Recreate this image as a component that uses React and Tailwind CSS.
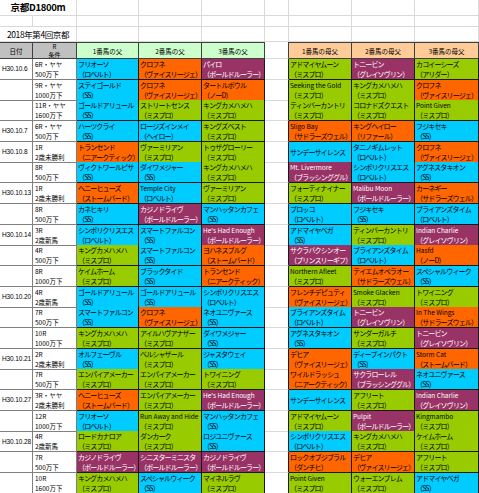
import React from "react";

const COLORS = {
  b: "bg-[#00ccff] text-black",
  o: "bg-[#ff6600] text-black",
  g: "bg-[#99cc00] text-black",
  p: "bg-[#993366] text-white",
};

const rows = [
  ["H30.10.6", "6R・ヤヤ", "500万下",
    [["フリオーソ", "（ロベルト）", "b"], ["クロフネ", "（ヴァイスリージェ）", "o"], ["パイロ", "（ボールドルーラー）", "p"]],
    [["アドマイヤムーン", "（ミスプロ）", "g"], ["トニービン", "（グレイソヴリン）", "p"], ["カコイーシーズ", "（アリダー）", "g"]]],
  ["", "9R・ヤヤ", "1000万下",
    [["ステイゴールド", "（SS）", "b"], ["クロフネ", "（ヴァイスリージェ）", "o"], ["タートルボウル", "（ノーD）", "o"]],
    [["Seeking the Gold", "（ミスプロ）", "g"], ["キングカメハメハ", "（ミスプロ）", "g"], ["クロフネ", "（ヴァイスリージェ）", "o"]]],
  ["", "11R・ヤヤ", "1600万下",
    [["ゴールドアリュール", "（SS）", "b"], ["ストリートセンス", "（ミスプロ）", "g"], ["キングカメハメハ", "（ミスプロ）", "g"]],
    [["ティンバーカントリ", "（ミスプロ）", "g"], ["コロナドズクエスト", "（ミスプロ）", "g"], ["Point Given", "（ミスプロ）", "g"]]],
  ["H30.10.7", "6R・ヤヤ", "500万下",
    [["ハーツクライ", "（SS）", "b"], ["ロージズインメイ", "（ヘイロー）", "b"], ["キングズベスト", "（ミスプロ）", "g"]],
    [["Sligo Bay", "（サドラーズウェル）", "o"], ["キングヘイロー", "（リファール）", "o"], ["フジキセキ", "（SS）", "b"]]],
  ["H30.10.8", "1R", "2歳未勝利",
    [["トランセンド", "（ニアークティック）", "o"], ["ヴァーミリアン", "（ミスプロ）", "g"], ["トゥザグローリー", "（ミスプロ）", "g"]],
    [["サンデーサイレンス", "", "b"], ["タニノギムレット", "（ロベルト）", "b"], ["クロフネ", "（ヴァイスリージェ）", "o"]]],
  ["", "8R", "500万下",
    [["ヴィクトワールピサ", "（SS）", "b"], ["ダイワメジャー", "（SS）", "b"], ["キングカメハメハ", "（ミスプロ）", "g"]],
    [["Mt. Livermore", "（ブラッシンググル）", "p"], ["シンボリクリスエス", "（ロベルト）", "b"], ["アグネスタキオン", "（SS）", "b"]]],
  ["H30.10.13", "1R", "2歳未勝利",
    [["ヘニーヒューズ", "（ストームバード）", "o"], ["Temple City", "（ロベルト）", "b"], ["ヴァーミリアン", "（ミスプロ）", "g"]],
    [["フォーティナイナー", "（ミスプロ）", "g"], ["Malibu Moon", "（ボールドルーラー）", "p"], ["カーネギー", "（サドラーズウェル）", "o"]]],
  ["", "8R", "500万下",
    [["カネヒキリ", "（SS）", "b"], ["カジノドライヴ", "（ボールドルーラー）", "p"], ["マンハッタンカフェ", "（SS）", "b"]],
    [["ブロッコ", "（ロベルト）", "b"], ["フジキセキ", "（SS）", "b"], ["ブライアンズタイム", "（ロベルト）", "b"]]],
  ["H30.10.14", "3R", "2歳新馬",
    [["シンボリクリスエス", "（ロベルト）", "b"], ["スマートファルコン", "（SS）", "b"], ["He's Had Enough", "（ボールドルーラー）", "p"]],
    [["アドマイヤベガ", "（SS）", "b"], ["ティンバーカントリ", "（ミスプロ）", "g"], ["Indian Charlie", "（グレイソヴリン）", "p"]]],
  ["", "4R", "500万下",
    [["キングカメハメハ", "（ミスプロ）", "g"], ["スマートファルコン", "（SS）", "b"], ["ヨハネスブルグ", "（ストームバード）", "o"]],
    [["サクラバクシンオー", "（プリンスリーギフ）", "p"], ["ブライアンズタイム", "（ロベルト）", "b"], ["Hasfd", "（ノーD）", "o"]]],
  ["", "8R", "1000万下",
    [["ケイムホーム", "（ミスプロ）", "g"], ["ブラックタイド", "（SS）", "b"], ["トランセンド", "（ニアークティック）", "o"]],
    [["Northern Afleet", "（ミスプロ）", "g"], ["テイエムオペラオー", "（サドラーズウェル）", "o"], ["スペシャルウィーク", "（SS）", "b"]]],
  ["H30.10.20", "4R", "2歳新馬",
    [["ゴールドアリュール", "（SS）", "b"], ["ゴールドアリュール", "（SS）", "b"], ["シンボリクリスエス", "（ロベルト）", "b"]],
    [["フレンチデピュティ", "（ヴァイスリージェ）", "o"], ["Smoke Glacken", "（ミスプロ）", "g"], ["トワイニング", "（ミスプロ）", "g"]]],
  ["", "7R", "500万下",
    [["スマートファルコン", "（SS）", "b"], ["クロフネ", "（ヴァイスリージェ）", "o"], ["ネオユニヴァース", "（SS）", "b"]],
    [["ブライアンズタイム", "（ロベルト）", "b"], ["トニービン", "（グレイソヴリン）", "p"], ["In The Wings", "（サドラーズウェル）", "o"]]],
  ["", "10R", "1000万下",
    [["キングカメハメハ", "（ミスプロ）", "g"], ["アイルハヴアナザー", "（ミスプロ）", "g"], ["ダイワメジャー", "（SS）", "b"]],
    [["アグネスタキオン", "（SS）", "b"], ["サンダーガルチ", "（ミスプロ）", "g"], ["トニービン", "（グレイソヴリン）", "p"]]],
  ["H30.10.21", "2R", "2歳未勝利",
    [["オルフェーヴル", "（SS）", "b"], ["ベルシャザール", "（ミスプロ）", "g"], ["ジャスタウェイ", "（SS）", "b"]],
    [["デヒア", "（ヴァイスリージェ）", "o"], ["ディープインパクト", "（SS）", "b"], ["Storm Cat", "（ストームバード）", "o"]]],
  ["", "7R", "500万下",
    [["エンパイアメーカー", "（ミスプロ）", "g"], ["エンパイアメーカー", "（ミスプロ）", "g"], ["トワイニング", "（ミスプロ）", "g"]],
    [["ワイルドラッシュ", "（ニアークティック）", "o"], ["サクラローレル", "（ブラッシンググル）", "p"], ["ネオユニヴァース", "（SS）", "b"]]],
  ["H30.10.27", "3R・ヤヤ", "2歳未勝利",
    [["ヘニーヒューズ", "（ストームバード）", "o"], ["エンパイアメーカー", "（ミスプロ）", "g"], ["He's Had Enough", "（ボールドルーラー）", "p"]],
    [["サンデーサイレンス", "", "b"], ["アフリート", "（ミスプロ）", "g"], ["Indian Charlie", "（グレイソヴリン）", "p"]]],
  ["", "12R", "1000万下",
    [["フリオーソ", "（ロベルト）", "b"], ["Run Away and Hide", "（ミスプロ）", "g"], ["マンハッタンカフェ", "（SS）", "b"]],
    [["アドマイヤムーン", "（ミスプロ）", "g"], ["Pulpit", "（ボールドルーラー）", "p"], ["Kingmambo", "（ミスプロ）", "g"]]],
  ["H30.10.28", "4R", "2歳新馬",
    [["ロードカナロア", "（ミスプロ）", "g"], ["ダンカーク", "（ミスプロ）", "g"], ["ロジユニヴァース", "（SS）", "b"]],
    [["シンボリクリスエス", "（ロベルト）", "b"], ["キングカメハメハ", "（ミスプロ）", "g"], ["ケイムホーム", "（ミスプロ）", "g"]]],
  ["", "7R", "500万下",
    [["カジノドライヴ", "（ボールドルーラー）", "p"], ["シニスターミニスタ", "（ボールドルーラー）", "p"], ["カジノドライヴ", "（ボールドルーラー）", "p"]],
    [["ロックオブジブラル", "（ダンチヒ）", "o"], ["デヒア", "（ヴァイスリージェ）", "o"], ["アフリート", "（ミスプロ）", "g"]]],
  ["", "10R", "1600万下",
    [["キングカメハメハ", "（ミスプロ）", "g"], ["スペシャルウィーク", "（SS）", "b"], ["マイネルラヴ", "（ミスプロ）", "g"]],
    [["Point Given", "（ミスプロ）", "g"], ["ウォーエンブレム", "（ミスプロ）", "g"], ["アドマイヤベガ", "（SS）", "b"]]],
];

const GRID = "grid grid-cols-[33px_44px_62px_63px_63px_24px_63px_63px_64px]";

function Horse({ h }) {
  const [name, par, c] = h;
  const latin = /^[A-Za-z]/.test(name);
  return (
    <div className={`${COLORS[c]} border-r border-b border-[#1a1a1a] flex flex-col justify-center pl-[1px] overflow-hidden whitespace-nowrap leading-[10px]`}>
      <div className={latin ? "text-[6.5px] tracking-[0px]" : "text-[7px] tracking-[-0.85px]"}>{name}</div>
      {par && <div className="text-[7px] tracking-[-0.85px]">{par}</div>}
    </div>
  );
}

const light = "border-r border-b border-[#d9d9d9]";
const hdr = "border-r border-b border-t border-[#404040] flex items-center justify-center";

export default function App() {
  return (
    <div className="w-[479px] h-[493px] overflow-hidden bg-white text-black font-['Noto_Sans_CJK_JP',sans-serif]">
      <div className={`${GRID} h-[16px]`}>
        <div className={`col-span-2 ${light} flex items-center justify-center text-[9.5px] font-bold tracking-[-0.3px]`}>京都D1800m</div>
        {[0, 1, 2, 3, 4, 5, 6].map((i) => <div key={i} className={light} />)}
      </div>
      <div className={`${GRID} h-[11px]`}>
        {[0, 1, 2, 3, 4, 5, 6, 7, 8].map((i) => <div key={i} className={light} />)}
      </div>
      <div className={`${GRID} h-[15px]`}>
        <div className={`col-span-2 ${light} flex items-center justify-center text-[8.5px] tracking-[-0.4px]`}>2018年第4回京都</div>
        {[0, 1, 2, 3, 4, 5, 6].map((i) => <div key={i} className={light} />)}
      </div>
      <div className={`${GRID} h-[17px] text-[6.5px] leading-[8px]`}>
        <div className={`bg-[#c0c0c0] ${hdr}`}>日付</div>
        <div className="bg-[#c0c0c0] border-r border-b border-t border-[#404040] flex flex-col items-center justify-center text-[6px] leading-[7.5px]"><span>R</span><span>条件</span></div>
        <div className={`bg-[#ccffcc] ${hdr}`}>1番馬の父</div>
        <div className={`bg-[#ccffcc] ${hdr}`}>2番馬の父</div>
        <div className={`bg-[#ccffcc] ${hdr}`}>3番馬の父</div>
        <div className="border-r border-r-[#404040] border-b border-b-[#d9d9d9]" />
        <div className={`bg-[#ffcc99] ${hdr}`}>1番馬の母父</div>
        <div className={`bg-[#ffcc99] ${hdr}`}>2番馬の母父</div>
        <div className={`bg-[#ffcc99] ${hdr}`}>3番馬の母父</div>
      </div>
      {rows.map((r, i) => (
        <div key={i} className={`${GRID} h-[20.7px]`}>
          <div className="border-r border-b border-[#808080] flex items-center pl-[2px] text-[6.5px] tracking-[-0.1px] whitespace-nowrap font-['Liberation_Sans',sans-serif]">{r[0]}</div>
          <div className="border-r border-b border-[#808080] flex flex-col justify-center pl-[2px] text-[6.5px] leading-[10px] whitespace-nowrap">
            <div>{r[1]}</div>
            <div>{r[2]}</div>
          </div>
          {r[3].map((h, j) => <Horse key={j} h={h} />)}
          <div className="border-r border-r-[#1a1a1a] border-b border-b-[#d9d9d9]" />
          {r[4].map((h, j) => <Horse key={j} h={h} />)}
        </div>
      ))}
    </div>
  );
}
